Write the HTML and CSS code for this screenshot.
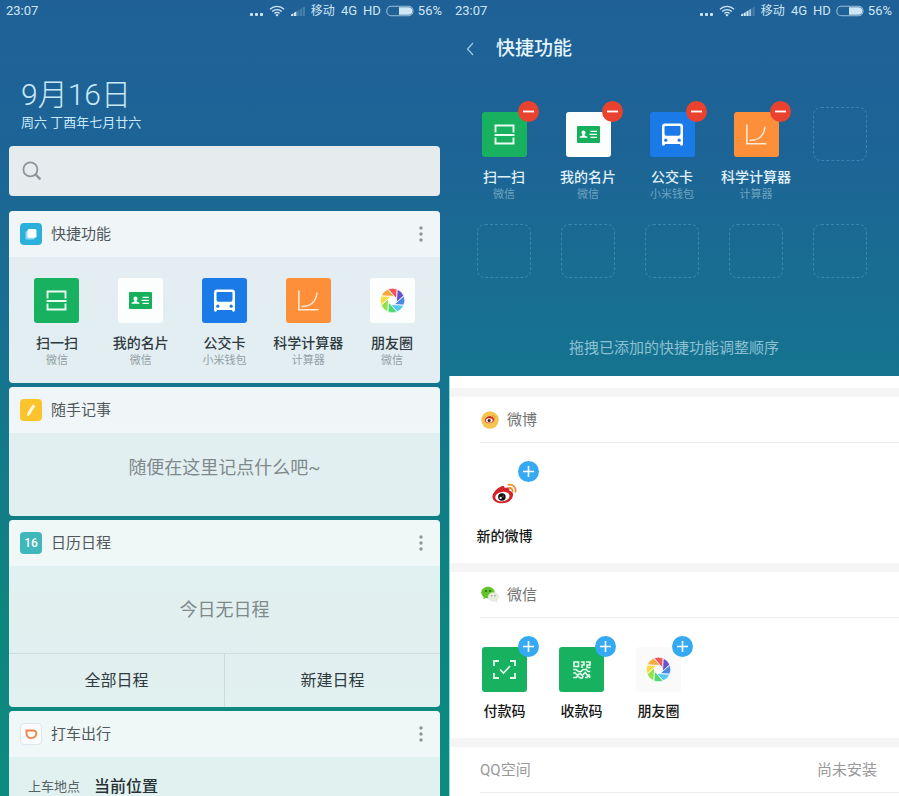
FILE: index.html
```html
<!DOCTYPE html>
<html lang="zh-CN">
<head>
<meta charset="utf-8">
<meta name="viewport" content="width=device-width, initial-scale=1">
<title>快捷功能</title>
<link rel="stylesheet" href="styles.css">
</head>
<body>
<svg class="sprite" aria-hidden="true">
  <symbol id="i-wifi" viewBox="0 0 16 12">
    <g fill="none" stroke="currentColor" stroke-width="1.4"><path d="M1 4.2a10 10 0 0 1 14 0"/><path d="M3.2 6.5a7 7 0 0 1 9.6 0"/><path d="M5.4 8.6a3.8 3.8 0 0 1 5.2 0"/></g><path d="M6.4 9.9a2.2 2.2 0 0 1 3.2 0L8 11.6z" fill="currentColor"/>
  </symbol>
  <symbol id="i-signal-low" viewBox="0 0 14 10">
    <g fill="currentColor"><path d="M0 10V8.6L2 7.6V10zM2.6 10V7.2l2.800-2V10z"/><path opacity=".22" d="M6 10V5.200l2.200-1.400V10zM8.800 10V3.600l2.200-1.500V10zM11.600 10V1.800L14 .3V10z"/></g>
  </symbol>
  <symbol id="i-signal-mid" viewBox="0 0 14 10">
    <g fill="currentColor"><path d="M0 10V8.6L2 7.6V10zM2.600 10V7.2l2.200-1.200V10zM5.400 10V5.6l2.200-1.400V10z"/><path opacity=".75" d="M8.200 10V4l2-1.400V10z"/><path opacity=".22" d="M11.400 10V2L13.600.5V10z"/></g>
  </symbol>
  <symbol id="i-battery" viewBox="0 0 28 12">
    <rect x=".8" y="1.3" width="26.2" height="9.4" rx="4.5" fill="none" stroke="currentColor" stroke-opacity=".7" stroke-width="1.1"/>
    <path d="M13 2.2h9.5a3.8 3.8 0 0 1 0 7.6H13z" fill="currentColor"/>
  </symbol>
  <symbol id="i-search" viewBox="0 0 20 20">
    <circle cx="8.4" cy="8.4" r="7" fill="none" stroke="#8c9599" stroke-width="1.8"/><path d="M13.4 13.4l5 5" stroke="#8c9599" stroke-width="2.2"/>
  </symbol>
  <symbol id="i-more" viewBox="0 0 6 18">
    <g fill="#8f9699"><circle cx="3" cy="3" r="1.7"/><circle cx="3" cy="9" r="1.7"/><circle cx="3" cy="15" r="1.7"/></g>
  </symbol>
  <symbol id="i-scan" viewBox="0 0 45 45">
    <path d="M13.5 20.500v-7h18v7M13.5 25.500v6h18v-6M12.5 23h20" fill="none" stroke="#e9fbf0" stroke-width="1.900"/>
  </symbol>
  <symbol id="i-card" viewBox="0 0 45 45">
    <rect x="11" y="14" width="23" height="17" rx="1" fill="#16b05c"/>
    <path d="M17.5 18.5c1.2 0 2 .9 2 2 0 .9-.4 1.7-.9 2.1v.8l2.4 1c.4.2.5.5.5 1.4h-8c0-.9.1-1.2.5-1.4l2.4-1v-.8c-.5-.4-.9-1.2-.9-2.1 0-1.1.8-2 2-2z" fill="#fff"/>
    <path d="M24.500 19.300H31M23.500 22.400H31M24.500 25.300H31" stroke="#fff" stroke-width="1.200"/>
  </symbol>
  <symbol id="i-bus" viewBox="0 0 45 45">
    <path fill="#fff" fill-rule="evenodd" d="M15 11.500h15a3 3 0 0 1 3 3V32c0 1.200-.5 1.700-1.500 1.700s-1.500-.5-1.500-1.700H15c0 1.200-.5 1.700-1.500 1.700S12 33.200 12 32V14.500a3 3 0 0 1 3-3zM15.700 14c-.8 0-1.200.4-1.200 1.200V21c0 2 .8 2.800 2.800 2.800h10.400c2 0 2.800-.8 2.800-2.800v-5.800c0-.8-.4-1.200-1.200-1.200z"/>
    <circle cx="15.800" cy="28.200" r="1.600" fill="#1a7be8"/><circle cx="29.200" cy="28.200" r="1.600" fill="#1a7be8"/>
  </symbol>
  <symbol id="i-chart" viewBox="0 0 45 45">
    <path d="M12.800 12.500v19.200H32.500" fill="none" stroke="#ffe9d6" stroke-width="1.600"/><path d="M15.500 28.500C24 28.500 30 24 31 14.500" fill="none" stroke="#ffe9d6" stroke-width="1.500"/>
  </symbol>
  <symbol id="i-moments" viewBox="-22.500 -22.500 45 45">
    <g stroke="#fff" stroke-width=".7">
      <path fill="#f2545c" d="M-4.600-11.400A12.300 12.300 0 0 1 4.600-11.400L4.200-1.700 1.700-4.200z"/>
      <path fill="#6b50cc" transform="rotate(45)" d="M-4.600-11.400A12.300 12.300 0 0 1 4.600-11.400L4.200-1.700 1.700-4.200z"/>
      <path fill="#4a8ae6" transform="rotate(90)" d="M-4.600-11.400A12.300 12.300 0 0 1 4.600-11.400L4.200-1.700 1.700-4.200z"/>
      <path fill="#56c8f0" transform="rotate(135)" d="M-4.600-11.400A12.300 12.300 0 0 1 4.600-11.400L4.200-1.700 1.700-4.200z"/>
      <path fill="#4fd873" transform="rotate(180)" d="M-4.600-11.400A12.300 12.300 0 0 1 4.600-11.400L4.200-1.700 1.700-4.200z"/>
      <path fill="#92e04c" transform="rotate(225)" d="M-4.600-11.400A12.300 12.300 0 0 1 4.600-11.400L4.200-1.700 1.700-4.200z"/>
      <path fill="#f6dc48" transform="rotate(270)" d="M-4.600-11.400A12.300 12.300 0 0 1 4.600-11.400L4.200-1.700 1.700-4.200z"/>
      <path fill="#f9a83e" transform="rotate(315)" d="M-4.600-11.400A12.300 12.300 0 0 1 4.600-11.400L4.200-1.700 1.700-4.200z"/>
    </g>
  </symbol>
  <symbol id="i-pay" viewBox="0 0 45 45">
    <path d="M17 14h-5v5M28 14h5v5M17 31h-5v-5M28 31h5v-5" fill="none" stroke="#e6fbee" stroke-width="1.800"/><path d="M18 22.500l3.500 3.500 6.500-7" fill="none" stroke="#e6fbee" stroke-width="1.600"/>
  </symbol>
  <symbol id="i-qr" viewBox="0 0 45 45">
    <g fill="none" stroke="#e6fbee" stroke-width="1.600">
      <rect x="15" y="15" width="4.500" height="4.500"/>
      <path d="M22 15h3v3h-2v3M27 15h4v3h-3v2.500h3.500M14.200 22.500h3l2 2h3l2-2h3l2 2h2M14.200 26h2l2 2 3-1.500 2 2 3-3 2 2.500h3M14.200 30.500h3l1.500-1.500 2.500 2h2l1-2M26 30.500h2l1-1.500 2.500 1.500"/>
    </g>
  </symbol>
  <symbol id="i-weibo" viewBox="0 0 24 20">
    <path fill="#d2232a" d="M8.800 3.200c2-.9 3.600-.5 3.300 1.600 2.700-1.100 5.200-.8 4.500 1.800-.1.600 0 .7.700 1 2.200.7 3.200 2 2.800 4.400C19.500 16.400 15.500 19.400 10 19.400S.4 16.800.4 13c0-3.600 4.700-8.600 8.400-9.800z"/>
    <ellipse cx="10" cy="13" rx="6.900" ry="4.600" transform="rotate(-8 10 13)" fill="#fff"/>
    <circle cx="9.500" cy="13.300" r="3.600" fill="#111"/><circle cx="8.300" cy="14.200" r="1.100" fill="#fff"/><circle cx="10.600" cy="12.400" r=".5" fill="#fff"/>
    <path d="M16.200 4.700c2.300-.3 3.900 1.300 3.500 3.600M15.700 1.600c4.300-.8 7.700 2.500 6.800 6.900" fill="none" stroke="#e88a2e" stroke-width="1.600" stroke-linecap="round"/>
  </symbol>
  <symbol id="i-weibo-round" viewBox="0 0 18 18">
    <circle cx="9" cy="9" r="8.700" fill="#f5c34f"/>
    <path fill="#cf3328" d="M8.300 5.100c1.200-.4 1.900 0 1.700.9 1.500-.5 2.500-.1 2.200 1 1.200.5 1.400 1.600.9 2.600-.8 1.700-2.800 2.700-5 2.600-2.600-.1-4.400-1.500-4.200-3.300.2-1.600 2.500-3.300 4.400-3.800z"/>
    <ellipse cx="8.300" cy="9.400" rx="3.300" ry="2.100" fill="#fff"/><circle cx="8.200" cy="9.400" r="1.500" fill="#4a1414"/>
    <path d="M11.500 4.700c1.800-.2 2.900 1.100 2.500 2.700" fill="none" stroke="#e8892e" stroke-width=".9"/>
  </symbol>
  <symbol id="i-wechat" viewBox="0 0 18 18">
    <path fill="#62c229" d="M7 .8c3.700 0 6.700 2.500 6.700 5.700S10.700 12.200 7 12.200c-.8 0-1.500-.1-2.200-.3L2.300 13.200l.5-2.300C1.200 9.800.2 8.300.2 6.500.2 3.300 3.300.8 7 .8z"/>
    <circle cx="4.900" cy="5" r=".9" fill="#245c10"/><circle cx="9" cy="5" r=".9" fill="#245c10"/>
    <path fill="#e9ece3" stroke="#d6dccd" stroke-width=".4" d="M12.400 6.400c3 0 5.300 1.900 5.300 4.400 0 1.400-.8 2.600-2 3.400l.4 1.700-1.900-.9c-.6.200-1.200.2-1.800.2-3 0-5.300-1.900-5.300-4.400s2.300-4.400 5.300-4.400z"/>
    <circle cx="10.700" cy="9.800" r=".7" fill="#7d8a72"/><circle cx="14" cy="9.800" r=".7" fill="#7d8a72"/>
  </symbol>
  <symbol id="i-minus" viewBox="0 0 21 21"><path d="M5 10.500h11" stroke="#fff" stroke-width="1.800"/></symbol>
  <symbol id="i-plus" viewBox="0 0 21 21"><path d="M5 10.500h11M10.500 5v11" stroke="#fff" stroke-width="1.600"/></symbol>
</svg>

<main class="screens">
  <section class="screen home">
    <div class="status">
      <span class="clock">23:07</span>
      <span class="dots"><i></i><i></i><i></i></span>
      <svg class="wifi"><use href="#i-wifi"/></svg>
      <svg class="signal"><use href="#i-signal-low"/></svg>
      <span class="carrier">移动</span><span class="net">4G</span><span class="hd">HD</span>
      <svg class="battery"><use href="#i-battery"/></svg>
      <span>56%</span>
    </div>
    <header class="today">
      <h1>9月16日</h1>
      <p>周六 丁酉年七月廿六</p>
    </header>
    <label class="search">
      <svg><use href="#i-search"/></svg>
      <input type="search" aria-label="搜索">
    </label>

    <article class="card">
      <header class="card-head">
        <svg class="app-icon" viewBox="0 0 22 22"><rect width="22" height="22" rx="4" fill="#2bb0dc"/><rect x="5.500" y="8" width="9" height="8.500" rx="1.500" fill="#8fdcf3"/><rect x="7.500" y="6" width="9" height="8.800" rx="1.500" fill="#fff"/></svg>
        <h2>快捷功能</h2>
        <button class="more" aria-label="更多"><svg><use href="#i-more"/></svg></button>
      </header>
      <div class="shortcuts">
        <a class="shortcut" href="#"><svg class="tile green"><use href="#i-scan"/></svg><b>扫一扫</b><small>微信</small></a>
        <a class="shortcut" href="#"><svg class="tile white"><use href="#i-card"/></svg><b>我的名片</b><small>微信</small></a>
        <a class="shortcut" href="#"><svg class="tile blue"><use href="#i-bus"/></svg><b>公交卡</b><small>小米钱包</small></a>
        <a class="shortcut" href="#"><svg class="tile orange"><use href="#i-chart"/></svg><b>科学计算器</b><small>计算器</small></a>
        <a class="shortcut" href="#"><svg class="tile white"><use href="#i-moments"/></svg><b>朋友圈</b><small>微信</small></a>
      </div>
    </article>

    <article class="card">
      <header class="card-head">
        <svg class="app-icon" viewBox="0 0 22 22"><rect width="22" height="22" rx="4" fill="#fcc42c"/><path d="M12.600 5.600l2.600 1.300-5.200 8.600-2.700 1.900.1-3.300z" fill="#fffbe8"/></svg>
        <h2>随手记事</h2>
      </header>
      <p class="empty note">随便在这里记点什么吧~</p>
    </article>

    <article class="card">
      <header class="card-head">
        <span class="app-icon day">16</span>
        <h2>日历日程</h2>
        <button class="more" aria-label="更多"><svg><use href="#i-more"/></svg></button>
      </header>
      <p class="empty agenda">今日无日程</p>
      <div class="actions">
        <button>全部日程</button>
        <button>新建日程</button>
      </div>
    </article>

    <article class="card">
      <header class="card-head">
        <svg class="app-icon" viewBox="0 0 22 22"><rect x=".5" y=".5" width="21" height="21" rx="3.500" fill="#fafbfc" stroke="#dde5ee"/><path d="M6.500 7.500h6.500c2.500 0 3.500 1.200 3.300 3-.3 2.800-2.300 4.600-5 4.600s-4.600-1.700-4.800-4.600z" fill="none" stroke="#ee8545" stroke-width="1.900"/></svg>
        <h2>打车出行</h2>
        <button class="more" aria-label="更多"><svg><use href="#i-more"/></svg></button>
      </header>
      <div class="ride"><span>上车地点</span><strong>当前位置</strong></div>
    </article>
  </section>

  <section class="screen editor">
    <div class="status">
      <span class="clock">23:07</span>
      <span class="dots"><i></i><i></i><i></i></span>
      <svg class="wifi"><use href="#i-wifi"/></svg>
      <svg class="signal"><use href="#i-signal-mid"/></svg>
      <span class="carrier">移动</span><span class="net">4G</span><span class="hd">HD</span>
      <svg class="battery"><use href="#i-battery"/></svg>
      <span>56%</span>
    </div>
    <header class="title-bar">
      <button class="back" aria-label="返回"><svg viewBox="0 0 8 14"><path d="M7 1L1.500 7 7 13" fill="none" stroke="#9cc8e0" stroke-width="1.300"/></svg></button>
      <h1>快捷功能</h1>
    </header>
    <div class="slots">
      <div class="slot"><span class="holder"><svg class="tile green"><use href="#i-scan"/></svg><button class="badge remove" aria-label="移除"><svg><use href="#i-minus"/></svg></button></span><b>扫一扫</b><small>微信</small></div>
      <div class="slot"><span class="holder"><svg class="tile white"><use href="#i-card"/></svg><button class="badge remove" aria-label="移除"><svg><use href="#i-minus"/></svg></button></span><b>我的名片</b><small>微信</small></div>
      <div class="slot"><span class="holder"><svg class="tile blue"><use href="#i-bus"/></svg><button class="badge remove" aria-label="移除"><svg><use href="#i-minus"/></svg></button></span><b>公交卡</b><small>小米钱包</small></div>
      <div class="slot"><span class="holder"><svg class="tile orange"><use href="#i-chart"/></svg><button class="badge remove" aria-label="移除"><svg><use href="#i-minus"/></svg></button></span><b>科学计算器</b><small>计算器</small></div>
      <div class="vacant"></div>
      <div class="vacant"></div>
      <div class="vacant"></div>
      <div class="vacant"></div>
      <div class="vacant"></div>
      <div class="vacant"></div>
    </div>
    <p class="hint">拖拽已添加的快捷功能调整顺序</p>

    <div class="sheet">
      <section class="group">
        <header class="group-head"><svg><use href="#i-weibo-round"/></svg><h2>微博</h2></header>
        <div class="options">
          <div class="option"><span class="holder"><svg class="tile"><use href="#i-weibo" x="10" y="11" width="25" height="21"/></svg><button class="badge add" aria-label="添加"><svg><use href="#i-plus"/></svg></button></span><b>新的微博</b></div>
        </div>
      </section>
      <section class="group">
        <header class="group-head"><svg><use href="#i-wechat"/></svg><h2>微信</h2></header>
        <div class="options">
          <div class="option"><span class="holder"><svg class="tile green"><use href="#i-pay"/></svg><button class="badge add" aria-label="添加"><svg><use href="#i-plus"/></svg></button></span><b>付款码</b></div>
          <div class="option"><span class="holder"><svg class="tile green"><use href="#i-qr"/></svg><button class="badge add" aria-label="添加"><svg><use href="#i-plus"/></svg></button></span><b>收款码</b></div>
          <div class="option"><span class="holder"><svg class="tile pale"><use href="#i-moments"/></svg><button class="badge add" aria-label="添加"><svg><use href="#i-plus"/></svg></button></span><b>朋友圈</b></div>
        </div>
      </section>
      <section class="group">
        <header class="group-head missing"><h2>QQ空间</h2><span>尚未安装</span></header>
      </section>
    </div>
  </section>
</main>
</body>
</html>
```

FILE: styles.css
```css
* { box-sizing: border-box; }

body, h1, h2, p { margin: 0; }

body {
  font-family: Roboto, "Noto Sans CJK SC", sans-serif;
  font-size: 14px;
  line-height: 20px;
  color: #2f3a3e;
}

h1, h2, b, small, strong { font-weight: 400; }
button { padding: 0; border: 0; background: none; font: inherit; color: inherit; cursor: pointer; }
a { color: inherit; text-decoration: none; }
svg { display: block; }
.sprite { position: absolute; width: 0; height: 0; }

.screens {
  display: grid;
  grid-template-columns: 449fr 450fr;
  height: 100vh;
  overflow: hidden;
}

.screen {
  min-width: 0;
  overflow: hidden;
  background: linear-gradient(#1f6197 0, #1d6496 150px, #15748f 376px, #0e847f 600px, #0c8c80 100%);
}

/* Status bar */
.status {
  display: flex;
  align-items: center;
  height: 22px;
  padding: 0 7px 0 6px;
  font-size: 13px;
  color: #cfe6f5;
}
.clock { margin-right: auto; }
.dots { display: flex; gap: 2px; margin: 6px 6px 0 0; }
.dots i { width: 3px; height: 3px; background: currentColor; border-radius: 1px; }
.wifi { width: 16px; height: 12px; margin-right: 6px; }
.signal { width: 14px; height: 10px; margin-right: 6px; }
.carrier { margin-right: 6px; font-size: 12px; }
.net { margin-right: 6px; }
.hd { margin-right: 5px; }
.battery { width: 28px; height: 12px; margin-right: 4px; }

/* Home screen */
.today { padding: 55px 21px 13px; color: #c9e8f8; }
.today h1 { font-size: 30px; line-height: 36px; font-weight: 300; }
.today p { font-size: 13px; line-height: 20px; }

.search {
  display: flex;
  align-items: center;
  height: 50px;
  margin: 0 9px 15px;
  padding: 0 13px;
  gap: 10px;
  border-radius: 4px;
  background: #e6ebee;
}
.search svg { width: 20px; height: 20px; }
.search input { flex: 1; min-width: 0; border: 0; outline: 0; background: none; font: inherit; }

.card {
  margin: 0 9px 4px;
  overflow: hidden;
  border-radius: 4px;
  background: rgba(255, 255, 255, .88);
}
.card-head {
  display: flex;
  align-items: center;
  gap: 9px;
  height: 46px;
  padding: 0 7px 0 11px;
  background: rgba(255, 255, 255, .48);
}
.card-head h2 { flex: 1; font-size: 15px; color: #50585c; }
.app-icon { width: 22px; height: 22px; }
.day {
  border-radius: 4px;
  background: #40b7ba;
  color: #fff;
  font-size: 12px;
  font-weight: 500;
  line-height: 22px;
  text-align: center;
}
.more { display: grid; place-items: center; width: 24px; height: 32px; }
.more svg { width: 6px; height: 18px; }

.shortcuts {
  display: grid;
  grid-template-columns: repeat(5, 1fr);
  padding: 21px 6px 14px;
}
.shortcut, .slot, .option {
  display: flex;
  flex-direction: column;
  align-items: center;
  white-space: nowrap;
}
.shortcut b, .slot b, .option b { font-size: 14px; font-weight: 500; line-height: 20px; }
.shortcut small, .slot small { font-size: 11px; line-height: 16px; }
.shortcut b { margin-top: 10px; }
.shortcut small { color: #92a0a5; }

.tile { width: 45px; height: 45px; border-radius: 3px; }
.green { background: #18b15f; }
.white { background: #fcfdfd; }
.blue { background: #1a7be8; }
.orange { background: #fd8f3b; }
.pale { background: #fafafa; }

.empty { font-size: 18px; text-align: center; color: #7f898c; }
.note { padding: 21px 0 34px; line-height: 28px; }
.agenda { padding: 30px 0 29px; line-height: 28px; }

.actions { display: flex; border-top: 1px solid #cfdcde; }
.actions button { flex: 1; height: 53px; font-size: 16px; }
.actions button + button { border-left: 1px solid #cfdcde; }

.ride { display: flex; align-items: center; gap: 14px; padding: 16px 19px; line-height: 28px; }
.ride span { font-size: 13px; color: #566165; }
.ride strong { font-size: 16px; font-weight: 500; color: #263034; }

/* Shortcut editor */
.editor { display: flex; flex-direction: column; }
.editor > * { flex-shrink: 0; }
.title-bar { display: flex; align-items: center; height: 54px; padding-left: 9px; color: #e4f4fc; }
.title-bar h1 { font-size: 19px; font-weight: 500; }
.back { display: grid; place-items: center; width: 24px; height: 32px; margin-right: 14px; }
.back svg { width: 8px; height: 14px; }

.slots {
  display: grid;
  grid-template-columns: repeat(5, 1fr);
  row-gap: 21px;
  padding: 31px 17px 0 13px;
}
.holder { position: relative; }
.slot .holder { margin: 5px 0 10px; }
.slot b { color: #e0f1fa; }
.slot small { color: #6ea3bf; }
.vacant {
  justify-self: center;
  width: 54px;
  height: 54px;
  border: 1px dashed rgba(120, 190, 220, .35);
  border-radius: 8px;
}
.badge {
  position: absolute;
  top: -11px;
  right: -12px;
  width: 21px;
  height: 21px;
  border-radius: 50%;
}
.badge svg { width: 21px; height: 21px; }
.remove { background: #e9432f; }
.add { background: #35aaf2; }

.hint {
  padding: 60px 0 18px;
  font-size: 15px;
  line-height: 20px;
  text-align: center;
  color: #8cc0d2;
}

.sheet {
  flex: 1 0 auto;
  padding-top: 12px;
  border-left: 1px solid #8fdde2;
  background: #fff;
}
.group { border-top: 9px solid #f5f5f5; }
.group-head {
  display: flex;
  align-items: center;
  gap: 8px;
  height: 46px;
  margin-left: 30px;
  padding: 0 22px 0 1px;
  border-bottom: 1px solid #ededed;
  font-size: 15px;
  color: #737373;
}
.group-head h2 { font-size: 15px; }
.group-head svg { width: 18px; height: 18px; }
.missing { justify-content: space-between; padding-left: 0; color: #999; }
.options {
  display: grid;
  grid-template-columns: repeat(auto-fill, 77px);
  padding: 29px 16px 17px;
}
.option b { margin-top: 9px; color: #161616; }
```
